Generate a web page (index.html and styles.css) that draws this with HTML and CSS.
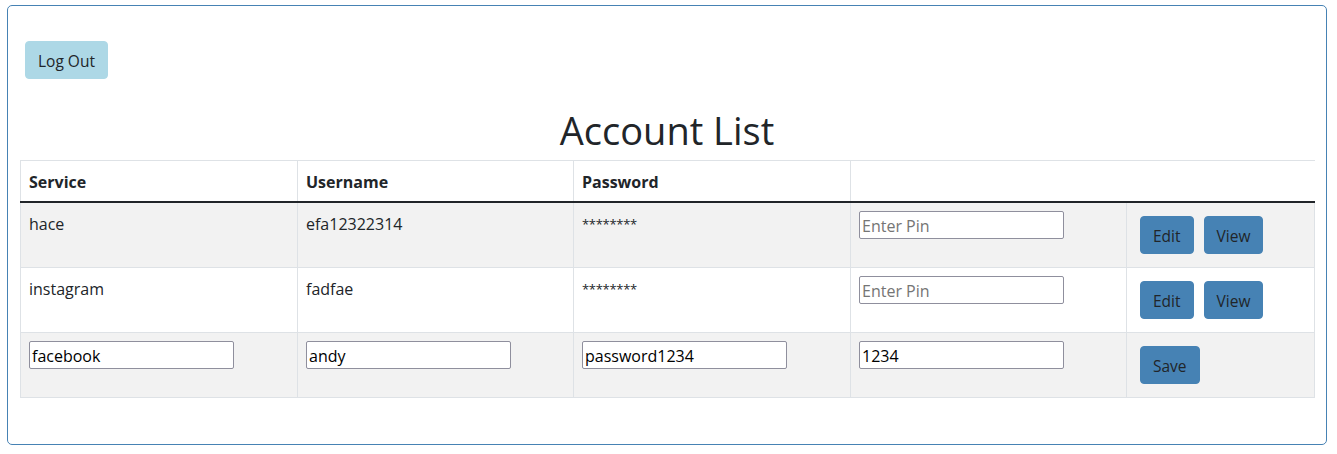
FILE: index.html
```html
<!DOCTYPE html>
<html lang="en">
<head>
<meta charset="utf-8">
<title>Account List</title>
<link rel="stylesheet" href="styles.css">
</head>
<body>
<div class="panel">
  <div class="topbar">
    <button class="btn btn-logout" type="button">Log Out</button>
  </div>
  <h1 class="title">Account List</h1>
  <table class="accounts">
    <colgroup>
      <col class="col-wide">
      <col class="col-narrow">
      <col class="col-wide">
      <col class="col-narrow">
      <col class="col-actions">
    </colgroup>
    <thead>
      <tr>
        <th>Service</th>
        <th>Username</th>
        <th>Password</th>
        <th class="last"></th>
      </tr>
    </thead>
    <tbody>
      <tr class="striped">
        <td><span class="cell-text">hace</span></td>
        <td><span class="cell-text">efa12322314</span></td>
        <td><span class="masked">********</span></td>
        <td><input class="field" type="text" placeholder="Enter Pin"></td>
        <td><button class="btn btn-blue" type="button">Edit</button><button class="btn btn-blue" type="button">View</button></td>
      </tr>
      <tr>
        <td><span class="cell-text">instagram</span></td>
        <td><span class="cell-text">fadfae</span></td>
        <td><span class="masked">********</span></td>
        <td><input class="field" type="text" placeholder="Enter Pin"></td>
        <td><button class="btn btn-blue" type="button">Edit</button><button class="btn btn-blue" type="button">View</button></td>
      </tr>
      <tr class="striped">
        <td><input class="field" type="text" value="facebook"></td>
        <td><input class="field" type="text" value="andy"></td>
        <td><input class="field" type="text" value="password1234"></td>
        <td><input class="field" type="text" value="1234"></td>
        <td><button class="btn btn-blue" type="button">Save</button></td>
      </tr>
    </tbody>
  </table>
</div>
</body>
</html>
```

FILE: styles.css
```css
* { box-sizing: border-box; }

html, body {
  margin: 0;
  padding: 0;
  background: #fff;
}

body {
  font-family: "Open Sans", "Noto Sans", "Liberation Sans", sans-serif;
  font-size: 16px;
  line-height: 1.5;
  color: #212529;
}

.panel {
  margin: 5px 10px 0 7px;
  height: 440px;
  border: 1px solid #4682b4;
  border-radius: 5px;
  padding: 30px 12px 0 12px;
}

.topbar {
  display: flex;
}

.btn {
  font-family: inherit;
  font-size: 15.5px;
  line-height: 24px;
  color: #212529;
  border: 1px solid transparent;
  border-radius: 4px;
  padding: 7px 12px 5px 12px;
  margin: 5px;
  height: 38px;
  cursor: pointer;
}

.btn-logout {
  background: #add8e6;
  border-color: #add8e6;
}

.btn-blue {
  background: #4682b4;
  border-color: #4682b4;
}

.title {
  margin: 22px 0 6px 0;
  text-align: center;
  font-size: 38px;
  line-height: 48px;
  font-weight: 400;
}

.accounts {
  width: 1294px;
  border-collapse: collapse;
  table-layout: fixed;
}

.col-wide { width: 277px; }
.col-narrow { width: 276px; }
.col-actions { width: 188px; }

.accounts thead tr {
  border-top: 1px solid #dee2e6;
  border-bottom: 2px solid #212529;
}

.accounts th {
  text-align: left;
  font-weight: 700;
  padding: 8px 8px 7px 8px;
  height: 41px;
  vertical-align: bottom;
  border-left: 1px solid #dee2e6;
}

.accounts td {
  padding: 8px;
  vertical-align: top;
  border: 1px solid #dee2e6;
  height: 65px;
}

.accounts tbody tr:first-child td {
  border-top: 0;
}

.accounts tr.striped td {
  background: #f2f2f2;
}

.cell-text {
  position: relative;
  top: 1px;
}

.masked {
  font-size: 13px;
  letter-spacing: -0.3px;
}

.field {
  width: 205px;
  height: 28px;
  font-family: inherit;
  font-size: 16px;
  line-height: 24px;
  padding: 2px 2px 0 2px;
  border: 1px solid #8f8f9d;
  border-radius: 2px;
  background: #fff;
  color: #000;
}

.field::placeholder {
  color: #757575;
}
```
